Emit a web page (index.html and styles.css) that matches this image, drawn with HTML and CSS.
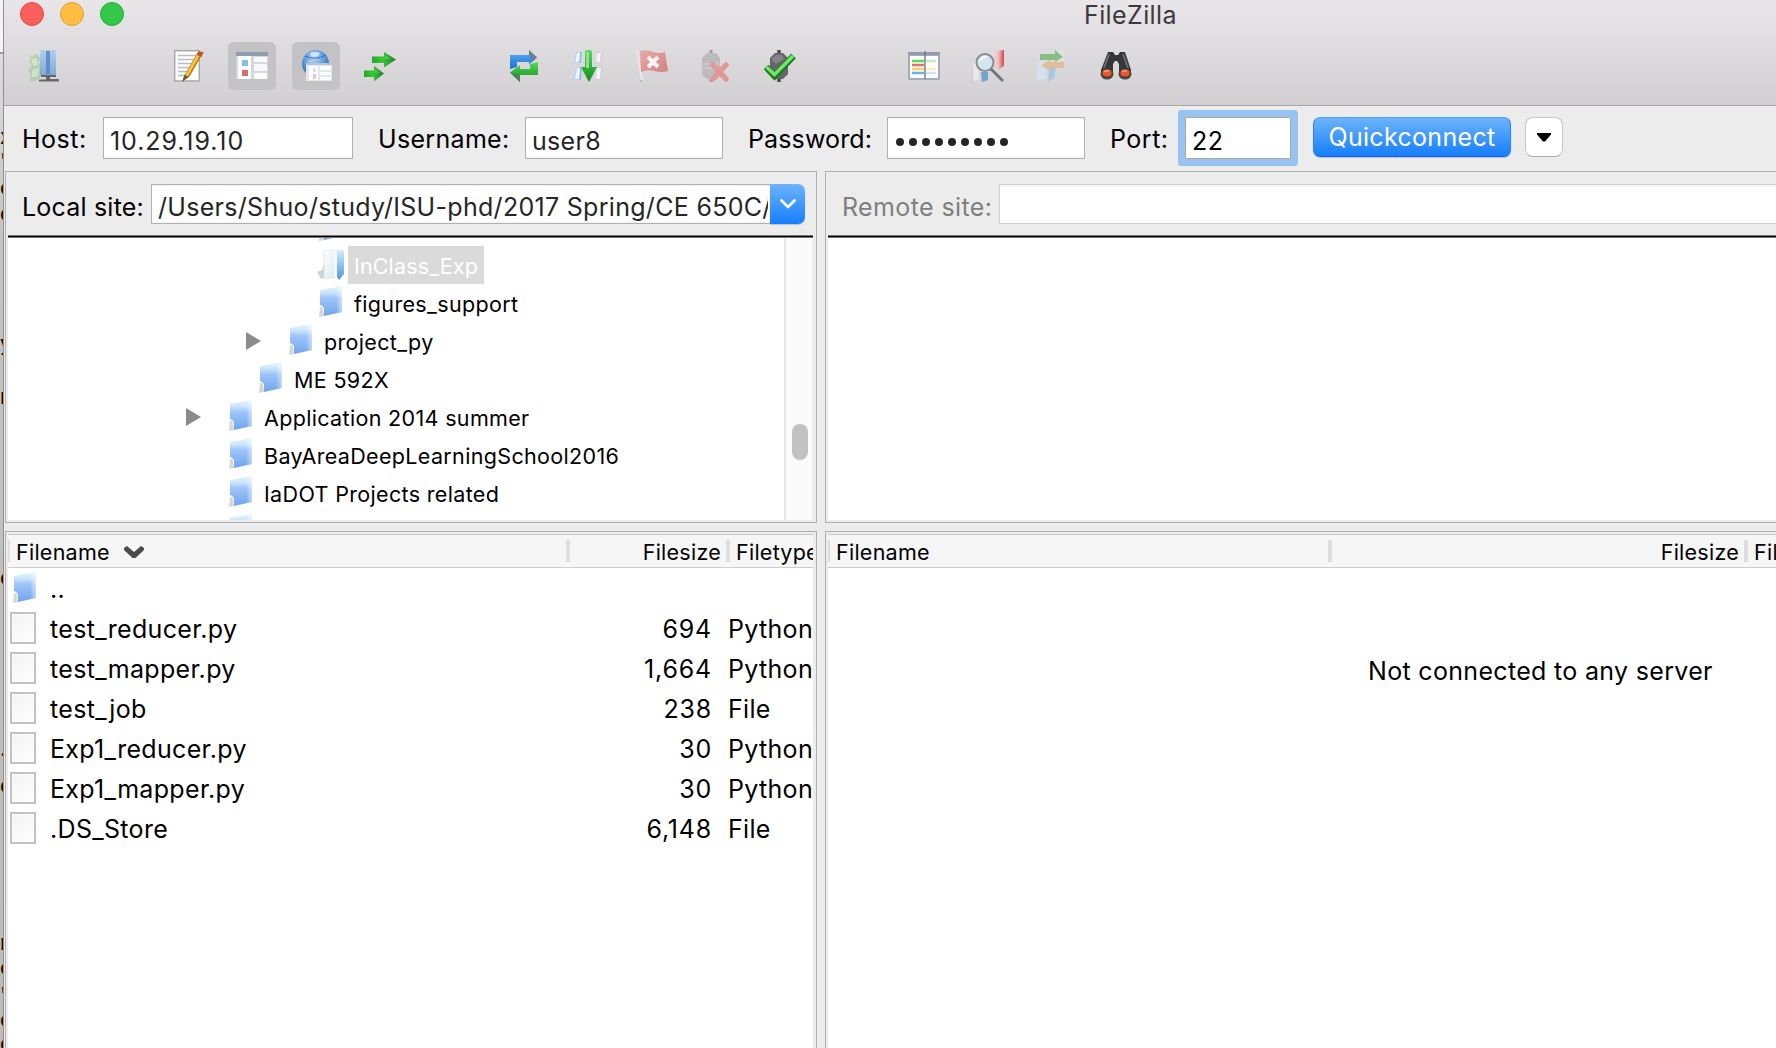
FILE: index.html
```html
<!DOCTYPE html>
<html lang="en">
<head>
<meta charset="utf-8">
<title>FileZilla</title>
<link rel="stylesheet" href="styles.css">
</head>
<body>
<svg class="defs" aria-hidden="true">
  <defs>
    <linearGradient id="gBlue" x1="0" y1="0" x2="0" y2="1"><stop offset="0" stop-color="#5fb2f5"/><stop offset="1" stop-color="#1a72cf"/></linearGradient>
    <linearGradient id="gGreen" x1="0" y1="0" x2="0" y2="1"><stop offset="0" stop-color="#55dd58"/><stop offset="1" stop-color="#128a1c"/></linearGradient>
    <linearGradient id="gArrow" x1="0" y1="0" x2="1" y2="0"><stop offset="0" stop-color="#22a829"/><stop offset=".45" stop-color="#32c832"/><stop offset="1" stop-color="#2e7a32"/></linearGradient>
    <linearGradient id="gTower" x1="0" y1="0" x2="0" y2="1"><stop offset="0" stop-color="#b5d3ee"/><stop offset="1" stop-color="#79a5d6"/></linearGradient>
    <linearGradient id="gFolder" x1="0" y1="0" x2="0" y2="1"><stop offset="0" stop-color="#e4f5fe"/><stop offset=".22" stop-color="#c9e5fd"/><stop offset=".4" stop-color="#9ec5fa"/><stop offset="1" stop-color="#6fa5ea"/></linearGradient>
    <linearGradient id="gFolderEdge" x1="0" y1="0" x2="1" y2="0"><stop offset="0" stop-color="#fff" stop-opacity="0"/><stop offset="1" stop-color="#fff" stop-opacity=".5"/></linearGradient>
    <linearGradient id="gOpen" x1="0" y1="0" x2="0" y2="1"><stop offset="0" stop-color="#d2edfb"/><stop offset="1" stop-color="#4d96dc"/></linearGradient>
    <linearGradient id="gLeaf" x1="0" y1="0" x2="1" y2="1"><stop offset="0" stop-color="#ffffff"/><stop offset="1" stop-color="#d9e5eb"/></linearGradient>
    <linearGradient id="gFlag" x1="0" y1="0" x2="1" y2="1"><stop offset="0" stop-color="#e8a8a6"/><stop offset="1" stop-color="#cf8480"/></linearGradient>
    <radialGradient id="gGlobe" cx=".45" cy=".3" r=".7"><stop offset="0" stop-color="#b9d9f5"/><stop offset=".55" stop-color="#5b97d8"/><stop offset="1" stop-color="#2467b8"/></radialGradient>
    <linearGradient id="gRed" x1="0" y1="0" x2="1" y2="0"><stop offset="0" stop-color="#f0dadb"/><stop offset=".5" stop-color="#ecc4c5"/><stop offset="1" stop-color="#d2484c"/></linearGradient>
    <symbol id="folder" viewBox="0 0 24 32">
      <path d="M1 21 Q4 20 4 24 L5 30 L0 31 Z" fill="#d6d7d9"/>
      <path d="M1 4 L23 0 V26 L5 30 V24 Q5 20 1 19 Z" fill="url(#gFolder)"/>
      <path d="M17 1 L23 0 V26 L17 27.300 Z" fill="url(#gFolderEdge)"/>
    </symbol>
    <symbol id="folder-open" viewBox="0 0 28 32">
      <path d="M0 23 L5 21 L7 14 L9 28 L4 30 Z" fill="#c6d2de"/>
      <path d="M7 2 L12 1 L20 1 V28 L7 30 Z" fill="url(#gLeaf)" stroke="#d5e4ee" stroke-width=".8"/>
      <path d="M20 1 H27 V25 L22 31 L20 28 Z" fill="url(#gOpen)"/>
      <path d="M17 1 L20 1 V28 L17 29 Z" fill="#f2f8fb"/>
    </symbol>
  </defs>
</svg>

<div class="desktop">
  <div class="behind" aria-hidden="true">
    <span class="bit b1">x</span><span class="bit b2">'</span><span class="bit b3">c</span><span class="bit b4">c</span><span class="bit b5">y</span><span class="bit b6">r</span><span class="bit b7">c</span><span class="bit b8">.</span><span class="bit b9">c</span><span class="bit b10">r</span><span class="bit b11">c</span><span class="bit b12">'</span><span class="bit b13">c</span><span class="bit b14">c</span>
  </div>
  <main class="window">
    <header class="chrome">
      <div class="titlebar">
        <div class="lights"><i class="light close"></i><i class="light mini"></i><i class="light full"></i></div>
        <h1 class="title">FileZilla</h1>
      </div>
      <nav class="toolbar">
        <div class="group">
          <button class="tool" aria-label="Site Manager"><svg viewBox="0 0 32 32">
            <path d="M0 4 L4 7 L9 4 L12 8 L11 13 L14 18 L12 28 L7 31 L1 31 L3 25 L0 20 L4 16 L1 11 L3 8 Z" fill="#b4d0ae"/>
            <path d="M3 9 L9 8 L10 15 L5 16 Z M4 20 L11 18 L9 27 L4 27 Z" fill="#cfe2ca"/>
            <rect x="12" y="0" width="16" height="25" fill="url(#gTower)"/><rect x="18" y="1" width="4" height="23" fill="#5f8fc6"/><path d="M15.500 0 V24 M25 0 V24" stroke="#96bde2"/>
            <path d="M13 25 H28 V27 H22 V29 H31 V31.500 H11 V29.500 H18 V27 H13 Z" fill="#67686c"/></svg></button>
        </div>
        <div class="group">
          <button class="tool" aria-label="Message log"><svg viewBox="0 0 32 32">
            <rect x="2.700" y=".7" width="24.600" height="30.300" fill="#fff" stroke="#a8a8a8" stroke-width="1.500"/>
            <path d="M6 5.500 H24 M6 9.500 H24 M6 13.500 H22 M6 17.500 H20 M6 21.500 H17 M6 25.500 H14" stroke="#b8bdc9" stroke-width="1.500"/>
            <path d="M27.500 4 L15 26" stroke="#b97b14" stroke-width="5"/><path d="M27 4 L14.500 26" stroke="#f9c440" stroke-width="2.800"/>
            <path d="M26 1.500 L31.500 2 L29.500 7 L25 5 Z" fill="#c0512a"/><path d="M12.500 24.500 L17 27 L10 32 Z" fill="#6f5b3c"/></svg></button>
          <button class="tool on" aria-label="Local tree"><svg viewBox="0 0 32 32">
            <rect x="0" y="2" width="32" height="27" fill="#d4d9df"/><rect x="0" y="2" width="32" height="4" fill="#929eb0"/>
            <rect x="2" y="6" width="13" height="23" fill="#fbfcfd"/><rect x="18" y="7" width="13" height="5" fill="#f9fafb"/><rect x="18" y="14" width="13" height="7" fill="#f7f8f9"/><rect x="18" y="23" width="13" height="6" fill="#fbfbfb"/>
            <rect x="6" y="10" width="6" height="6" fill="#8dbbe4"/><rect x="6" y="20" width="6" height="6" fill="#d76e6e"/></svg></button>
          <button class="tool on" aria-label="Remote tree"><svg viewBox="0 0 32 32">
            <circle cx="15.500" cy="13.500" r="13.500" fill="url(#gGlobe)"/><path d="M5 6 Q15 11 26 5" fill="none" stroke="#2f74c4" stroke-width="1"/><path d="M10 3 Q15 1 20 3 L18 6 Q15 7 11 6 Z M4 14 Q9 9 14 12 H6 Z" fill="#cfe6f8"/>
            <rect x="6" y="13" width="26" height="18" fill="#e3e7ec"/><rect x="6" y="13" width="26" height="2" fill="#b9c5d4"/><rect x="9" y="16" width="9" height="14" fill="#fdfdfe"/><path d="M20 16 H31 V20 H20 Z M20 22 H31 V25 H20 Z M20 27 H31 V30 H20 Z" fill="#fafbfc"/>
            <rect x="13" y="18" width="3" height="4" fill="#cfe2f3"/><rect x="13" y="24" width="3" height="5" fill="#f4c0c0"/></svg></button>
          <button class="tool" aria-label="Transfer queue"><svg viewBox="0 0 32 32">
            <path d="M8 6.500 H20 V2 L32 9.500 L20 17.500 V13 H8 Z" fill="url(#gArrow)"/><path d="M8 8 H21 V5 L27 9 Z" fill="#60dd5e" opacity=".55"/>
            <path d="M0 20.500 H10 V16 L20 23.500 L10 31.500 V27 H0 Z" fill="url(#gArrow)"/><path d="M0 22 H11 V19 L16 23 Z" fill="#60dd5e" opacity=".55"/></svg></button>
        </div>
        <div class="group">
          <button class="tool" aria-label="Refresh"><svg viewBox="0 0 32 32">
            <path d="M2 5 H21 V0 L29 7.500 L21 14.500 V12 H9 V17 L2 19 Z" fill="url(#gBlue)"/><path d="M21 0 L29 7.500 L24 12 L21 4 Z" fill="#66809f"/>
            <path d="M30 12 V25 H12 V32 L2 22.500 L12 15 V19 H22 V14 Z" fill="url(#gGreen)"/><path d="M2 22.500 L12 32 V26 Z" fill="#4c8251"/></svg></button>
          <button class="tool" aria-label="Process queue"><svg viewBox="0 0 32 32">
            <path d="M4 2 H10 L8 13 H1 Z M4 17 H10 L8 30 H1 Z" fill="#b5d2ef"/><path d="M5 3 H9 L7 12 H3 Z M5 18 H9 L7 29 H3 Z" fill="#edf6fd"/><path d="M9 2 L8 13 M9 17 L8 30" stroke="#8ab8e6" stroke-width="1.500"/>
            <path d="M25 2 H31 L29 13 H23 Z M25 17 H31 L29 30 H23 Z" fill="#d0d0d3"/><path d="M25 3 H29 L28 12 H24 Z M25 18 H29 L28 29 H24 Z" fill="#f4f4f4"/>
            <path d="M13 1 Q17 -1 20 1 V17 H25 L17 32 L9 17 H13 Z" fill="url(#gGreen)"/><path d="M14 2 H17 V18 H14 Z" fill="#91df8b"/></svg></button>
          <button class="tool" aria-label="Cancel"><svg viewBox="0 0 32 32">
            <path d="M1 0 L6 30" stroke="#e9e6ea" stroke-width="2.500"/><path d="M5 30 V32" stroke="#bcbabd" stroke-width="2"/>
            <path d="M4 1 Q11 -1 17 2 Q23 4 29 2 L32 21 Q25 23 18 21 Q11 19 5 22 Z" fill="url(#gFlag)"/>
            <path d="M12 7 L22 17 M22 7 L12 17" stroke="#fbf3f3" stroke-width="4"/></svg></button>
          <button class="tool" aria-label="Disconnect"><svg viewBox="0 0 32 32">
            <path d="M11 0 V4 M11 28 V32" stroke="#a09ea1" stroke-width="3"/><path d="M2 8 L7 3 H16 L20 8 V25 L16 29 H7 L2 25 Z" fill="#bcbbbe"/><path d="M3 14 H19 M3 18 H19" stroke="#cfced0" stroke-width="1.500"/>
            <path d="M13 15 L26 29 M26 15 L13 29" stroke="#e39795" stroke-width="5.500" stroke-linecap="round"/></svg></button>
          <button class="tool" aria-label="Reconnect"><svg viewBox="0 0 32 32">
            <path d="M15 0 V32" stroke="#4d4d50" stroke-width="3.500"/><path d="M6 8 L11 3 H19 L24 8 V24 L19 29 H11 L6 24 Z" fill="#66666a"/><path d="M7 9 L12 5 H18 L20 9 L12 14 Z" fill="#858589"/>
            <path d="M2 17 L10.500 26 L29.500 6" fill="none" stroke="#197d1e" stroke-width="6.500"/><path d="M2.500 17 L10.500 24.500 L29 6" fill="none" stroke="#76e36e" stroke-width="3.500"/></svg></button>
        </div>
        <div class="group">
          <button class="tool" aria-label="Directory listing filters"><svg viewBox="0 0 32 32">
            <rect x="0" y="2" width="32" height="28" fill="#a2acba"/><rect x="2" y="6" width="28" height="22" fill="#fdfdfd"/><rect x="0" y="2" width="32" height="3" fill="#8f9cae"/>
            <path d="M4 11 H16" stroke="#56dc52" stroke-width="2.500"/><path d="M4 15 H16" stroke="#e56f6d" stroke-width="2.500"/><path d="M4 19 H16" stroke="#f3d858" stroke-width="2.500"/><path d="M4 23 H16" stroke="#65b2ec" stroke-width="2.500"/>
            <path d="M18 11 H28" stroke="#bdf1b9" stroke-width="2.500"/><path d="M18 19 H28" stroke="#fbeebc" stroke-width="2.500"/><path d="M18 23 H28" stroke="#cce4f8" stroke-width="2.500"/><path d="M17 1 V29" stroke="#67717f" stroke-width="1.300"/></svg></button>
          <button class="tool" aria-label="Directory comparison"><svg viewBox="0 0 32 32">
            <path d="M0 16 L3 12 L7 16 V29 L1 32 Z" fill="#e8e7e9"/><path d="M0 16 V32 H2" fill="none" stroke="#b6b4b8"/><path d="M20 2 L32 0 V16 L26 20 L20 12 Z" fill="url(#gRed)"/>
            <path d="M9 22 H16 V30 L10 32 Z" fill="#6fa5d4"/><circle cx="13" cy="12.500" r="8.500" fill="#d4e5f1" stroke="#8b8c91" stroke-width="2"/><path d="M8 11 Q10 6 15 7" fill="none" stroke="#f8fcff" stroke-width="2"/>
            <path d="M19 19 L31 31" stroke="#717276" stroke-width="2.800"/></svg></button>
          <button class="tool" aria-label="Synchronized browsing"><svg viewBox="0 0 32 32">
            <path d="M1 12 L8 10 L10 29 L1 31 Z" fill="#d5e2ed"/><path d="M13 16 L20 14 L18 28 L12 32 Z" fill="#a5c7e5"/><path d="M22 1 L28 0 V14 H22 Z" fill="#dfe0e1"/>
            <path d="M4 4 H19 V0 L27 7 L19 12 V10 H4 Z" fill="#86c086"/><path d="M28 11 V18 H14 V21 L5 15 L14 10 V12 H23 Z" fill="#e0bf98"/></svg></button>
          <button class="tool" aria-label="File search"><svg viewBox="0 0 32 32">
            <path d="M8 2 L13 2 L15 5 H18 L20 2 L25 2 L31 20 V26 H19 V14 L17 11 H15 L13 14 V26 H1 V20 Z" fill="#353638"/><path d="M9 4 L4 18 M23 4 L28 18" stroke="#6a6b6f" stroke-width="2"/>
            <ellipse cx="7" cy="24" rx="6.500" ry="5.500" fill="#4c4440"/><ellipse cx="25" cy="24" rx="6.500" ry="5.500" fill="#4c4440"/>
            <ellipse cx="7" cy="23" rx="4.500" ry="3.500" fill="#ed5424"/><ellipse cx="25" cy="23" rx="4.500" ry="3.500" fill="#ed5424"/><path d="M4 22 Q6 20 9 21 M22 22 Q24 20 27 21" stroke="#f6a283" stroke-width="1.500" fill="none"/></svg></button>
        </div>
      </nav>
    </header>

    <section class="quick">
      <label class="lab host">Host:</label><div class="field f-host digits">10.29.19.10</div>
      <label class="lab user">Username:</label><div class="field f-user">user8</div>
      <label class="lab pass">Password:</label><div class="field f-pass"><i></i><i></i><i></i><i></i><i></i><i></i><i></i><i></i><i></i></div>
      <label class="lab port">Port:</label><div class="field f-port">22</div>
      <button class="connect">Quickconnect</button>
      <button class="more" aria-label="Recent servers"><svg viewBox="0 0 14 9"><path d="M0 0 H14 V1.500 L8 8.500 H6 L0 1.500 Z" fill="#000"/></svg></button>
    </section>

    <div class="panes">
      <section class="pane">
        <div class="site"><span class="site-label">Local site:</span>
          <div class="combo"><div class="path"><span>/Users/Shuo/study/ISU-phd/2017 Spring/CE 650C/</span></div><button class="drop" aria-label="Show paths"><svg viewBox="0 0 16 10"><path d="M1.500 1.500 L8 8 L14.500 1.500" fill="none" stroke="#fff" stroke-width="2.700" stroke-linecap="round" stroke-linejoin="round"/></svg></button></div>
        </div>
        <div class="treebox">
          <ul class="tree">
            <li class="node d4 cut"><svg class="fi"><use href="#folder"/></svg></li>
            <li class="node d4"><svg class="fi open"><use href="#folder-open"/></svg><span class="name sel">InClass_Exp</span></li>
            <li class="node d4"><svg class="fi"><use href="#folder"/></svg><span class="name">figures_support</span></li>
            <li class="node d3"><svg class="tri" viewBox="0 0 15 18"><path d="M0 0 L15 9 L0 18 Z" fill="#8b8b8b"/></svg><svg class="fi"><use href="#folder"/></svg><span class="name">project_py</span></li>
            <li class="node d2"><svg class="fi"><use href="#folder"/></svg><span class="name">ME 592X</span></li>
            <li class="node d1"><svg class="tri" viewBox="0 0 15 18"><path d="M0 0 L15 9 L0 18 Z" fill="#8b8b8b"/></svg><svg class="fi"><use href="#folder"/></svg><span class="name">Application 2014 summer</span></li>
            <li class="node d1"><svg class="fi"><use href="#folder"/></svg><span class="name">BayAreaDeepLearningSchool2016</span></li>
            <li class="node d1"><svg class="fi"><use href="#folder"/></svg><span class="name">IaDOT Projects related</span></li>
            <li class="node d1"><svg class="fi"><use href="#folder"/></svg></li>
          </ul>
          <div class="scroll"><i class="thumb"></i></div>
        </div>
      </section>

      <section class="pane remote">
        <div class="site off"><span class="site-label">Remote site:</span><div class="combo"><div class="path"></div></div></div>
        <div class="treebox"></div>
      </section>

      <section class="pane list">
        <div class="head cols">
          <i class="sep"></i><span class="h">Filename<svg class="sort" viewBox="0 0 20 12"><path d="M0 2 L3 0 L10 6 L17 0 L20 2 V4 L11.500 12 H8.500 L0 4 Z" fill="#4b4b4b"/></svg></span>
          <i class="sep"></i><span class="h num">Filesize</span><i class="sep"></i><span class="h type">Filetype</span>
        </div>
        <div class="rows">
          <div class="row"><svg class="fi"><use href="#folder"/></svg><span class="fn">..</span></div>
          <div class="row"><i class="doc"></i><span class="fn">test_reducer.py</span><span class="sz">694</span><span class="ty">Python</span></div>
          <div class="row"><i class="doc"></i><span class="fn">test_mapper.py</span><span class="sz">1,664</span><span class="ty">Python</span></div>
          <div class="row"><i class="doc"></i><span class="fn">test_job</span><span class="sz">238</span><span class="ty">File</span></div>
          <div class="row"><i class="doc"></i><span class="fn">Exp1_reducer.py</span><span class="sz">30</span><span class="ty">Python</span></div>
          <div class="row"><i class="doc"></i><span class="fn">Exp1_mapper.py</span><span class="sz">30</span><span class="ty">Python</span></div>
          <div class="row"><i class="doc"></i><span class="fn">.DS_Store</span><span class="sz">6,148</span><span class="ty">File</span></div>
        </div>
      </section>

      <section class="pane list remote">
        <div class="head cols rcols">
          <i class="sep"></i><span class="h">Filename</span>
          <i class="sep"></i><span class="h num">Filesize</span><i class="sep"></i><span class="h type">Filetype</span>
        </div>
        <div class="rows"><p class="empty">Not connected to any server</p></div>
      </section>
    </div>
  </main>
</div>
</body>
</html>
```
FILE: styles.css
```css
* { box-sizing: border-box; }
html, body { margin: 0; height: 100%; overflow: hidden; }
body { font-family: Inter, "Liberation Sans", sans-serif; font-size: 25px; letter-spacing: .32px; line-height: 30px; color: #000; background: #ececec; }
button { border: 0; padding: 0; margin: 0; background: none; font: inherit; letter-spacing: inherit; }
svg, i { display: block; flex: none; }
.defs { position: absolute; width: 0; height: 0; }

.desktop { display: flex; width: 1776px; height: 1048px; overflow: hidden; }

/* sliver of the window underneath */
.behind { position: relative; flex: none; width: 4px; overflow: hidden; border-right: 1px solid #8f8f8f;
  background: linear-gradient(#f4f4f4 0 52px, #999 52px 54px, #dcdcdc 54px, #c4c3c2 240px, #bcbbb9); }
.bit { position: absolute; left: 0; font-size: 21px; font-weight: 500; line-height: 24px; color: #1c0d00; }
.b1 { top: 125px; } .b2 { top: 150px; } .b3 { top: 176px; } .b4 { top: 202px; } .b5 { top: 332px; }
.b6 { top: 385px; } .b7 { top: 566px; } .b8 { top: 737px; } .b9 { top: 774px; } .b10 { top: 931px; }
.b11 { top: 956px; } .b12 { top: 984px; } .b13 { top: 1008px; } .b14 { top: 1032px; }

.window { flex: 1; min-width: 0; display: flex; flex-direction: column; background: #ececec; }
.chrome { flex: none; height: 106px; background: linear-gradient(#e8e6e9, #d1cfd2); border-bottom: 1px solid #a9a7aa; }
.titlebar { display: flex; height: 42px; }
.lights { display: flex; gap: 16px; padding: 2px 0 0 16px; width: 1080px; }
.light { width: 24px; height: 24px; border-radius: 50%; border: 1px solid; }
.close { background: #fc605c; border-color: #e14a47; }
.mini { background: #fdbd41; border-color: #dfa032; }
.full { background: #34c84a; border-color: #24ab35; }
.title { margin: 0; font-size: 25px; font-weight: 400; line-height: 30px; letter-spacing: .4px; color: #3b393c; }
.toolbar { display: flex; gap: 96px; padding-left: 16px; }
.group { display: flex; gap: 16px; }
.tool { width: 48px; height: 48px; padding: 8px; border-radius: 6px; }
.tool svg { width: 32px; height: 32px; }
.tool.on { background: #c3c2c4; }

.quick { flex: none; display: flex; align-items: flex-start; height: 65px; padding: 11px 0 0 18px; }
.lab { padding-top: 7px; white-space: nowrap; }
.host { width: 81px; letter-spacing: .5px; }
.user { width: 147px; margin-left: 25px; letter-spacing: .32px; }
.pass { width: 139px; margin-left: 25px; letter-spacing: .14px; }
.port { width: 75px; margin-left: 25px; letter-spacing: .5px; }
.field { height: 42px; padding: 8px 0 0 6px; background: #fff; border: 1px solid #b1b1b1; box-shadow: inset 0 1px #f0f0f0, inset 0 -1px #f3f3f3; color: #262626; line-height: 30px; }
.field.digits { letter-spacing: .95px; }
.f-host { width: 250px; }
.f-user { width: 198px; letter-spacing: .32px; }
.f-pass { display: flex; gap: 5px; width: 198px; padding: 20px 0 0 8px; }
.f-pass i { width: 8px; height: 8px; border-radius: 50%; background: #262626; }
.f-port { width: 106px; border-color: #b1a9a1; box-shadow: 0 0 0 7px #97c3f3; border-radius: 1px; color: #000; letter-spacing: .5px; }
.connect { width: 198px; height: 40px; margin-left: 22px; padding-bottom: 1px; border-radius: 7px; color: #fff; line-height: 30px; background: linear-gradient(#6cb3fa, #167efc); border: 1px solid; border-color: #569ff0 #2a80f4 #0f65f0; box-shadow: 0 1px 1px #c3c3c3; }
.more { display: grid; place-items: center; width: 38px; height: 40px; margin-left: 14px; border-radius: 8px; background: #fff; border: 1px solid #c6c6c6; border-bottom-color: #adadad; padding-top: 1px; }
.more svg { width: 14px; height: 9px; }

.panes { flex: 1; min-height: 0; display: grid; grid-template: 352px 1fr / 812px 1fr; gap: 8px; padding-left: 1px; }
.pane { display: flex; flex-direction: column; min-width: 0; min-height: 0; overflow: hidden; border: 1px solid #b0b0b0; padding: 0 3px 2px 2px; }
.pane.remote { border-right: 0; padding-right: 0; }
.site { flex: none; display: flex; height: 63px; padding: 12px 8px 0 14px; }
.site-label { width: 129px; padding-top: 8px; white-space: nowrap; letter-spacing: .2px; }
.combo { flex: 1; min-width: 0; display: flex; height: 40px; }
.path { flex: 1; min-width: 0; overflow: hidden; padding: 7px 2px 0 6px; white-space: nowrap; background: #fff; border: 1px solid #b1b1b1; border-right: 0; box-shadow: inset 0 1px #f0f0f0, inset 0 -1px #f3f3f3; color: #262626; letter-spacing: .3px; line-height: 30px; }
.path span { display: block; overflow: hidden; }
.drop { display: grid; place-items: center; width: 35px; border-radius: 0 7px 7px 0; background: linear-gradient(#6cb3fa, #167efc); box-shadow: 0 1px 1px #c3c3c3; }
.drop svg { width: 16px; height: 10px; }
.off { padding-right: 0; }
.off .site-label { width: 157px; color: #7f7f7f; letter-spacing: .38px; }
.off .path { border-color: #cfcfcf; box-shadow: inset 0 2px #f5f5f5; }
.treebox { flex: 1; min-height: 0; display: flex; overflow: hidden; padding-top: 3px; background: linear-gradient(#777 0 1px, #000 1px 2px, #777 2px 3px, #fff 3px); }

.tree { flex: 1; min-width: 0; overflow: hidden; list-style: none; margin: 0; padding: 0; font-size: 21.5px; letter-spacing: .34px; }
.node { display: flex; align-items: center; height: 38px; }
.node.cut { margin-top: -30px; }
.d4 { padding-left: 311px; } .d3 { padding-left: 281px; } .d2 { padding-left: 251px; } .d1 { padding-left: 221px; }
.fi { width: 24px; height: 32px; }
.node .fi { margin-top: -2px; }
.node .open { width: 28px; margin: -1px 0 0 -2px; }
.node .open + .name { margin-left: 3px; }
.tri { width: 15px; height: 18px; margin: 0 28px 0 -43px; }
.name { height: 38px; margin-left: 5px; padding: 1px 6px 0; line-height: 38px; white-space: nowrap; }
.sel { width: 136px; background: #dadada; color: #fff; letter-spacing: .14px; }
.scroll { flex: none; width: 29px; background: #fafafa; border-left: 2px solid #e8e8e8; border-right: 1px solid #ededed; padding: 186px 0 0 6px; }
.thumb { width: 16px; height: 36px; border-radius: 8px; background: #c1c1c1; }

.list { padding-top: 2px; padding-bottom: 0; border-bottom: 0; }
.cols { display: grid; grid-template-columns: 2px 556px 4px 156px 4px 83px; }
.rcols { grid-template-columns: 2px 498px 4px 412px 4px 28px; }
.head { flex: none; height: 34px; background: #f6f6f6; border-top: 1px solid #c8c8c8; border-bottom: 1px solid #cdcdcd; font-size: 21.5px; line-height: 32px; }
.sep { height: 22px; margin-top: 5px; background: #dedede; }
.h { display: flex; align-items: center; padding: 1px 0 0 6px; white-space: nowrap; overflow: hidden; letter-spacing: .25px; }
.num { justify-content: flex-end; padding-right: 5px; }
.h.type { padding-left: 6px; }
.sort { width: 20px; height: 12px; margin-left: 14px; }
.rows { flex: 1; background: #fff; overflow: hidden; }
.row { display: grid; grid-template-columns: 39px 516px 147px 1fr; height: 40px; padding-left: 2px; align-items: center; line-height: 40px; white-space: nowrap; }
.row > span { height: 40px; padding-top: 1px; overflow: hidden; }
.row .fi { margin-left: 3px; }
.doc { width: 26px; height: 32px; border: 2px solid #c2c2c2; background: linear-gradient(135deg, #f4f4f4, #fdfdfd); box-shadow: inset 0 0 0 1px #fff; }
.fn { padding-left: 1px; }
.sz { text-align: right; letter-spacing: .8px; }
.row > .ty { padding-left: 16px; }
.empty { margin: 88px 0 0 540px; line-height: 30px; letter-spacing: .32px; white-space: nowrap; }
```
